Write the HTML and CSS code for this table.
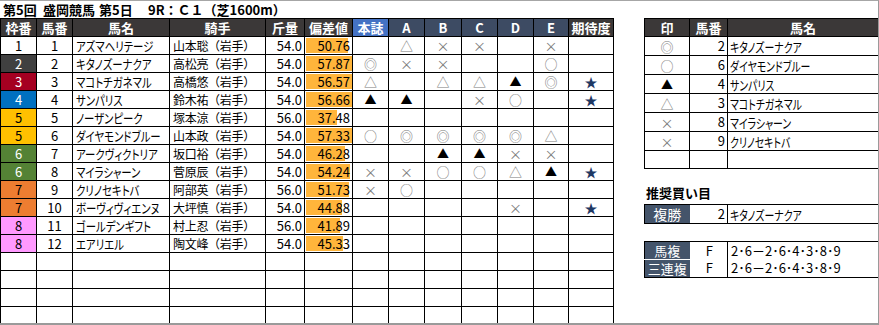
FILE: index.html
```html
<!DOCTYPE html>
<html lang="ja">
<head>
<meta charset="utf-8">
<title>盛岡競馬 9R</title>
<link rel="stylesheet" href="styles.css">
</head>
<body>
<div class="sheet">
  <div class="left">
    <div class="title">
      <span class="t1">第5回</span><span class="t2">盛岡競馬</span><span class="t3">第5日</span><span class="t4">9R：Ｃ１（芝1600m）</span>
    </div>
    <table class="main">
      <colgroup>
        <col class="c-waku"><col class="c-num"><col class="c-name"><col class="c-jockey"><col class="c-kin"><col class="c-dev">
        <col class="c-m"><col class="c-m"><col class="c-m2"><col class="c-m"><col class="c-m"><col class="c-m3"><col class="c-exp">
      </colgroup>
      <thead>
        <tr>
          <th class="h-dark">枠番</th><th class="h-dark">馬番</th><th class="h-dark">馬名</th><th class="h-dark">騎手</th><th class="h-dark">斤量</th><th class="h-dark">偏差値</th>
          <th class="h-blue">本誌</th><th class="h-slate">A</th><th class="h-slate">B</th><th class="h-slate">C</th><th class="h-slate">D</th><th class="h-slate">E</th><th class="h-dark">期待度</th>
        </tr>
      </thead>
      <tbody>
        <tr><td class="waku w1">1</td><td class="num">1</td><td class="name"><span class="nm">アズマヘリテージ</span></td><td class="jockey">山本聡（岩手）</td><td class="kin">54.0</td><td class="dev" style="--w:42px">50.76</td>
          <td class="mk"></td><td class="mk g">△</td><td class="mk g">×</td><td class="mk g">×</td><td class="mk"></td><td class="mk g">×</td><td class="mk"></td></tr>
        <tr><td class="waku w2">2</td><td class="num">2</td><td class="name"><span class="nm">キタノズーナクア</span></td><td class="jockey">高松亮（岩手）</td><td class="kin">54.0</td><td class="dev" style="--w:46px">57.87</td>
          <td class="mk g">◎</td><td class="mk g">×</td><td class="mk g">×</td><td class="mk"></td><td class="mk"></td><td class="mk g">○</td><td class="mk"></td></tr>
        <tr><td class="waku w3">3</td><td class="num">3</td><td class="name"><span class="nm">マコトチガネマル</span></td><td class="jockey">高橋悠（岩手）</td><td class="kin">54.0</td><td class="dev" style="--w:46px">56.57</td>
          <td class="mk g">△</td><td class="mk"></td><td class="mk g">△</td><td class="mk g">△</td><td class="mk b">▲</td><td class="mk g">◎</td><td class="mk star">★</td></tr>
        <tr><td class="waku w4">4</td><td class="num">4</td><td class="name"><span class="nm">サンパリス</span></td><td class="jockey">鈴木祐（岩手）</td><td class="kin">54.0</td><td class="dev" style="--w:46px">56.66</td>
          <td class="mk b">▲</td><td class="mk b">▲</td><td class="mk"></td><td class="mk g">×</td><td class="mk g">○</td><td class="mk"></td><td class="mk star">★</td></tr>
        <tr><td class="waku w5">5</td><td class="num">5</td><td class="name"><span class="nm">ノーザンピーク</span></td><td class="jockey">塚本涼（岩手）</td><td class="kin">56.0</td><td class="dev" style="--w:31px">37.48</td>
          <td class="mk"></td><td class="mk"></td><td class="mk"></td><td class="mk"></td><td class="mk"></td><td class="mk"></td><td class="mk"></td></tr>
        <tr><td class="waku w5">5</td><td class="num">6</td><td class="name"><span class="nm">ダイヤモンドブルー</span></td><td class="jockey">山本政（岩手）</td><td class="kin">54.0</td><td class="dev" style="--w:46px">57.33</td>
          <td class="mk g">○</td><td class="mk g">◎</td><td class="mk g">◎</td><td class="mk g">◎</td><td class="mk g">◎</td><td class="mk g">△</td><td class="mk"></td></tr>
        <tr><td class="waku w6">6</td><td class="num">7</td><td class="name"><span class="nm">アークヴィクトリア</span></td><td class="jockey">坂口裕（岩手）</td><td class="kin">54.0</td><td class="dev" style="--w:39px">46.28</td>
          <td class="mk"></td><td class="mk"></td><td class="mk b">▲</td><td class="mk b">▲</td><td class="mk g">×</td><td class="mk g">×</td><td class="mk"></td></tr>
        <tr><td class="waku w6">6</td><td class="num">8</td><td class="name"><span class="nm">マイラシャーン</span></td><td class="jockey">菅原辰（岩手）</td><td class="kin">54.0</td><td class="dev" style="--w:44px">54.24</td>
          <td class="mk g">×</td><td class="mk g">×</td><td class="mk g">○</td><td class="mk g">○</td><td class="mk g">△</td><td class="mk b">▲</td><td class="mk star">★</td></tr>
        <tr><td class="waku w7">7</td><td class="num">9</td><td class="name"><span class="nm">クリノセキトバ</span></td><td class="jockey">阿部英（岩手）</td><td class="kin">56.0</td><td class="dev" style="--w:43px">51.73</td>
          <td class="mk g">×</td><td class="mk g">○</td><td class="mk"></td><td class="mk"></td><td class="mk"></td><td class="mk"></td><td class="mk"></td></tr>
        <tr><td class="waku w7">7</td><td class="num">10</td><td class="name"><span class="nm">ボーヴィヴィエンヌ</span></td><td class="jockey">大坪慎（岩手）</td><td class="kin">54.0</td><td class="dev" style="--w:36px">44.88</td>
          <td class="mk"></td><td class="mk"></td><td class="mk"></td><td class="mk"></td><td class="mk g">×</td><td class="mk"></td><td class="mk star">★</td></tr>
        <tr><td class="waku w8">8</td><td class="num">11</td><td class="name"><span class="nm">ゴールデンギフト</span></td><td class="jockey">村上忍（岩手）</td><td class="kin">56.0</td><td class="dev" style="--w:34px">41.89</td>
          <td class="mk"></td><td class="mk"></td><td class="mk"></td><td class="mk"></td><td class="mk"></td><td class="mk"></td><td class="mk"></td></tr>
        <tr><td class="waku w8">8</td><td class="num">12</td><td class="name"><span class="nm">エアリエル</span></td><td class="jockey">陶文峰（岩手）</td><td class="kin">54.0</td><td class="dev" style="--w:37px">45.33</td>
          <td class="mk"></td><td class="mk"></td><td class="mk"></td><td class="mk"></td><td class="mk"></td><td class="mk"></td><td class="mk"></td></tr>
        <tr class="empty"><td></td><td></td><td></td><td></td><td></td><td></td><td></td><td></td><td></td><td></td><td></td><td></td><td></td></tr>
        <tr class="empty"><td></td><td></td><td></td><td></td><td></td><td></td><td></td><td></td><td></td><td></td><td></td><td></td><td></td></tr>
        <tr class="empty"><td></td><td></td><td></td><td></td><td></td><td></td><td></td><td></td><td></td><td></td><td></td><td></td><td></td></tr>
        <tr class="empty"><td></td><td></td><td></td><td></td><td></td><td></td><td></td><td></td><td></td><td></td><td></td><td></td><td></td></tr>
      </tbody>
    </table>
  </div>
  <div class="right">
    <table class="marks">
      <colgroup><col class="r-mark"><col class="r-num"><col class="r-name"></colgroup>
      <thead><tr><th>印</th><th>馬番</th><th>馬名</th></tr></thead>
      <tbody>
        <tr><td class="mk g">◎</td><td class="rnum">2</td><td class="rname"><span class="rn">キタノズーナクア</span></td></tr>
        <tr><td class="mk g">○</td><td class="rnum">6</td><td class="rname"><span class="rn">ダイヤモンドブルー</span></td></tr>
        <tr><td class="mk b">▲</td><td class="rnum">4</td><td class="rname"><span class="rn">サンパリス</span></td></tr>
        <tr><td class="mk g">△</td><td class="rnum">3</td><td class="rname"><span class="rn">マコトチガネマル</span></td></tr>
        <tr><td class="mk g">×</td><td class="rnum">8</td><td class="rname"><span class="rn">マイラシャーン</span></td></tr>
        <tr><td class="mk g">×</td><td class="rnum">9</td><td class="rname"><span class="rn">クリノセキトバ</span></td></tr>
        <tr><td></td><td></td><td></td></tr>
      </tbody>
    </table>
    <div class="rec-title">推奨買い目</div>
    <table class="rec">
      <colgroup><col class="r-mark"><col class="r-num"><col class="r-name"></colgroup>
      <tr><td class="lbl big">複勝</td><td class="rnum">2</td><td class="rname bl"><span class="rn">キタノズーナクア</span></td></tr>
    </table>
    <table class="rec rec2">
      <colgroup><col class="r-mark"><col class="r-num"><col class="r-name"></colgroup>
      <tr><td class="lbl">馬複</td><td class="f">F</td><td class="combo bl">2･6－2･6･4･3･8･9</td></tr>
      <tr><td class="lbl">三連複</td><td class="f">F</td><td class="combo bl">2･6－2･6･4･3･8･9</td></tr>
    </table>
  </div>
</div>
</body>
</html>
```
FILE: styles.css
```css
html, body {
  margin: 0;
  padding: 0;
  background: #ffffff;
}
body {
  font-family: "Noto Sans CJK JP", "Noto Sans", sans-serif;
  color: #000000;
}
.sheet {
  display: flex;
  width: 879px;
  height: 325px;
  box-sizing: border-box;
  border-top: 1px solid #a6a6a6;
  border-right: 1px solid #9a9a9a;
  border-bottom: 2px solid #9a9a9a;
  overflow: hidden;
}
.left {
  display: flex;
  flex-direction: column;
  width: 613px;
}
.title {
  height: 17px;
  display: flex;
  align-items: center;
  font-size: 13px;
  font-weight: bold;
  line-height: 17px;
  padding-left: 3px;
  white-space: nowrap;
}
.t1 { width: 40px; }
.t2 { width: 56px; }
.t3 { width: 49px; }

table {
  border-collapse: collapse;
  table-layout: fixed;
}
td, th {
  border: 1px solid #000000;
  padding: 0;
  height: 17px;
  line-height: 16px;
  white-space: nowrap;
  overflow: hidden;
}
th {
  color: #ffffff;
  font-weight: bold;
  font-size: 13px;
}
.main { width: 613px; }
.c-waku { width: 36px; }
.c-num { width: 36px; }
.c-name { width: 97px; }
.c-jockey { width: 96px; }
.c-kin { width: 39px; }
.c-dev { width: 48px; }
.c-m { width: 36px; }
.c-m2 { width: 37px; }
.c-m3 { width: 35px; }
.c-exp { width: 45px; }

.h-dark { background: #3b3838; }
.h-blue { background: #4472c4; }
.h-slate { background: #3d4b63; }

.main td { font-size: 13px; }
.waku, .num { text-align: center; }
.w1 { background: #ffffff; }
.w2 { background: #404040; color: #ffffff; }
.w3 { background: #a50021; color: #ffffff; }
.w4 { background: #0070c0; color: #ffffff; }
.w5 { background: #ffc000; }
.w6 { background: #548235; color: #ffffff; }
.w7 { background: #ed7d31; }
.w8 { background: #ff99ff; }

.name {
  padding-left: 3px;
}
.nm {
  display: inline-block;
  font-size: 13px;
  font-feature-settings: "palt";
  transform: scaleX(0.8);
  transform-origin: left center;
}
.jockey {
  padding-left: 3px;
  font-size: 12px !important;
  letter-spacing: -0.3px;
}
.kin {
  text-align: right;
  padding-right: 2px !important;
}
.dev {
  text-align: right;
  padding-right: 2px !important;
  background-image: linear-gradient(#ffb53b, #ffb53b);
  background-repeat: no-repeat;
  background-position: 1px 1px;
  background-size: var(--w) 15px;
}
.mk {
  text-align: center;
  font-size: 13px !important;
  line-height: 15px;
}
.g { color: #7a7a7a; }
.b { color: #000000; font-size: 12px !important; }
.star { color: #1f3864; font-size: 13px !important; }

.right {
  margin-left: 31px;
  width: 234px;
  display: flex;
  flex-direction: column;
}
.marks {
  width: 234px;
  margin-top: 17px;
}
.marks th { background: #3b3838; }
.r-mark { width: 45px; }
.r-num { width: 38px; }
.r-name { width: 151px; }
.rnum {
  text-align: right;
  padding-right: 2px !important;
  font-size: 13px !important;
}
.rname {
  padding-left: 2px !important;
}
.rn {
  display: inline-block;
  font-size: 13px;
  font-feature-settings: "palt";
  transform: scaleX(0.76);
  transform-origin: left center;
}
.rec-title {
  font-size: 13px;
  font-weight: bold;
  height: 35px;
  line-height: 16px;
  display: flex;
  align-items: flex-end;
  padding-left: 2px;
  padding-bottom: 3px;
  box-sizing: border-box;
}
.rec {
  width: 234px;
}
.rec td {
  border-left: none;
  border-right: none;
}
.rec td.bl { border-left: 1px solid #000000; }
.rec td.lbl {
  background: #44546a;
  color: #ffffff;
  text-align: center;
  font-size: 13px;
  border-left: 1px solid #000000;
}
.rec td.lbl.big { font-size: 14px; }
.rec2 { margin-top: 17px; }
.rec2 tr:first-child td { border-bottom: none; }
.rec2 tr:first-child td.lbl { border-bottom: 1px solid #ffffff; }
.rec2 tr:last-child td { border-top: none; }
.f {
  text-align: center;
  font-size: 13px;
  padding-left: 2px !important;
}
.combo {
  padding-left: 3px !important;
  font-size: 13px;
}
```
